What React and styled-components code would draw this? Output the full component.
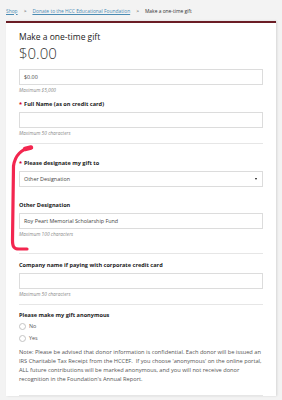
import React from 'react';
import styled, { createGlobalStyle } from 'styled-components';

const GlobalStyle = createGlobalStyle`
  body {
    margin: 0;
    background: #f3f3f3;
    font-family: 'Open Sans', 'Liberation Sans', sans-serif;
    color: #222;
  }
`;

const Page = styled.div`
  position: relative;
  width: 282px;
  height: 400px;
  overflow: hidden;
`;

const Crumbs = styled.div`
  display: flex;
  align-items: center;
  gap: 6px;
  height: 21px;
  padding-left: 6px;
  font-size: 4.9px;
  color: #333;
`;

const CrumbLink = styled.a`
  color: #4b8bb3;
  text-decoration: underline;
`;

const Card = styled.div`
  margin: 0 6px;
  background: #fff;
  border-top: 2px solid #6b1d25;
  box-shadow: 1px 0 2px rgba(0, 0, 0, 0.12);
  padding: 8px 13px 0;
`;

const Title = styled.div`
  font-size: 8.5px;
  line-height: 12px;
  color: #222;
`;

const Price = styled.div`
  margin-top: 2px;
  font-size: 15px;
  line-height: 16px;
  font-weight: 300;
  color: #333;
`;

const Section = styled.div`
  padding: ${(p) => p.$top || 0}px 0 ${(p) => p.$bottom || 6}px;
  border-bottom: 1px solid #e6e6e6;
`;

const Field = styled.div`
  margin-top: ${(p) => p.$gap || 0}px;
`;

const Label = styled.div`
  font-size: 5.6px;
  line-height: 9px;
  font-weight: 700;
  color: #222;
`;

const Req = styled.span`
  color: #d0021b;
  margin-right: 2px;
`;

const Input = styled.div`
  box-sizing: border-box;
  height: 16px;
  margin-top: ${(p) => p.$gap ?? 3}px;
  border: 1px solid #dcdcdc;
  display: flex;
  align-items: center;
  justify-content: space-between;
  padding: 0 4px;
  font-size: 5.4px;
  color: #444;
`;

const Caret = styled.span`
  width: 0;
  height: 0;
  border-left: 1.5px solid transparent;
  border-right: 1.5px solid transparent;
  border-top: 2px solid #111;
  margin-right: 1px;
`;

const Hint = styled.div`
  margin-top: 1px;
  font-size: 4.8px;
  line-height: 8px;
  font-style: italic;
  color: #8a8a8a;
`;

const Radio = styled.label`
  display: flex;
  align-items: center;
  gap: 3px;
  height: 12px;
  font-size: 5.4px;
  color: #555;
`;

const Circle = styled.span`
  box-sizing: border-box;
  width: 7px;
  height: 7px;
  border-radius: 50%;
  border: 1px solid #c4c4c4;
`;

const Note = styled.p`
  margin: 4px 0 0;
  font-size: 5.7px;
  line-height: 9px;
  color: #555;
  white-space: nowrap;
`;

const Marker = styled.svg`
  position: absolute;
  left: 0;
  top: 0;
  pointer-events: none;
`;

export default function App() {
  return (
    <Page>
      <GlobalStyle />
      <Crumbs>
        <CrumbLink>Shop</CrumbLink>
        <span>&gt;</span>
        <CrumbLink>Donate to the HCC Educational Foundation</CrumbLink>
        <span>&gt;</span>
        <span>Make a one-time gift</span>
      </Crumbs>
      <Card>
        <Section $bottom={6}>
          <Title>Make a one-time gift</Title>
          <Price>$0.00</Price>
          <Input $gap={8}>$0.00</Input>
          <Hint>Maximum $5,000</Hint>
          <Field $gap={6}>
            <Label><Req>*</Req>Full Name (as on credit card)</Label>
            <Input />
            <Hint>Maximum 50 characters</Hint>
          </Field>
        </Section>
        <Section $top={15} $bottom={15}>
          <Field>
            <Label><Req>*</Req>Please designate my gift to</Label>
            <Input>
              Other Designation
              <Caret />
            </Input>
          </Field>
          <Field $gap={14}>
            <Label>Other Designation</Label>
            <Input>Roy Peart Memorial Scholarship Fund</Input>
            <Hint>Maximum 100 characters</Hint>
          </Field>
        </Section>
        <Section $top={7} $bottom={6}>
          <Label>Company name if paying with corporate credit card</Label>
          <Input />
          <Hint>Maximum 50 characters</Hint>
        </Section>
        <Section $top={6} $bottom={11}>
          <Label>Please make my gift anonymous</Label>
          <Radio><Circle />No</Radio>
          <Radio><Circle />Yes</Radio>
          <Note>
            Note: Please be advised that donor information is confidential. Each donor will be issued an
            <br />
            IRS Charitable Tax Receipt from the HCCEF.&nbsp; If you choose 'anonymous' on the online portal,
            <br />
            ALL future contributions will be marked anonymous, and you will not receive donor
            <br />
            recognition in the Foundation's Annual Report.
          </Note>
        </Section>
      </Card>
      <Marker width="282" height="400" viewBox="0 0 282 400">
        <path
          d="M30 148 C22 149 15 155 13.5 166 L12.5 240 C12.5 247 14 249 19 249 L27 249"
          fill="none"
          stroke="#f3264f"
          strokeWidth="3.2"
          strokeLinecap="round"
          strokeLinejoin="round"
        />
        <path d="M25 149 L31 147.5" stroke="#f3264f" strokeWidth="4.5" strokeLinecap="round" />
      </Marker>
    </Page>
  );
}
